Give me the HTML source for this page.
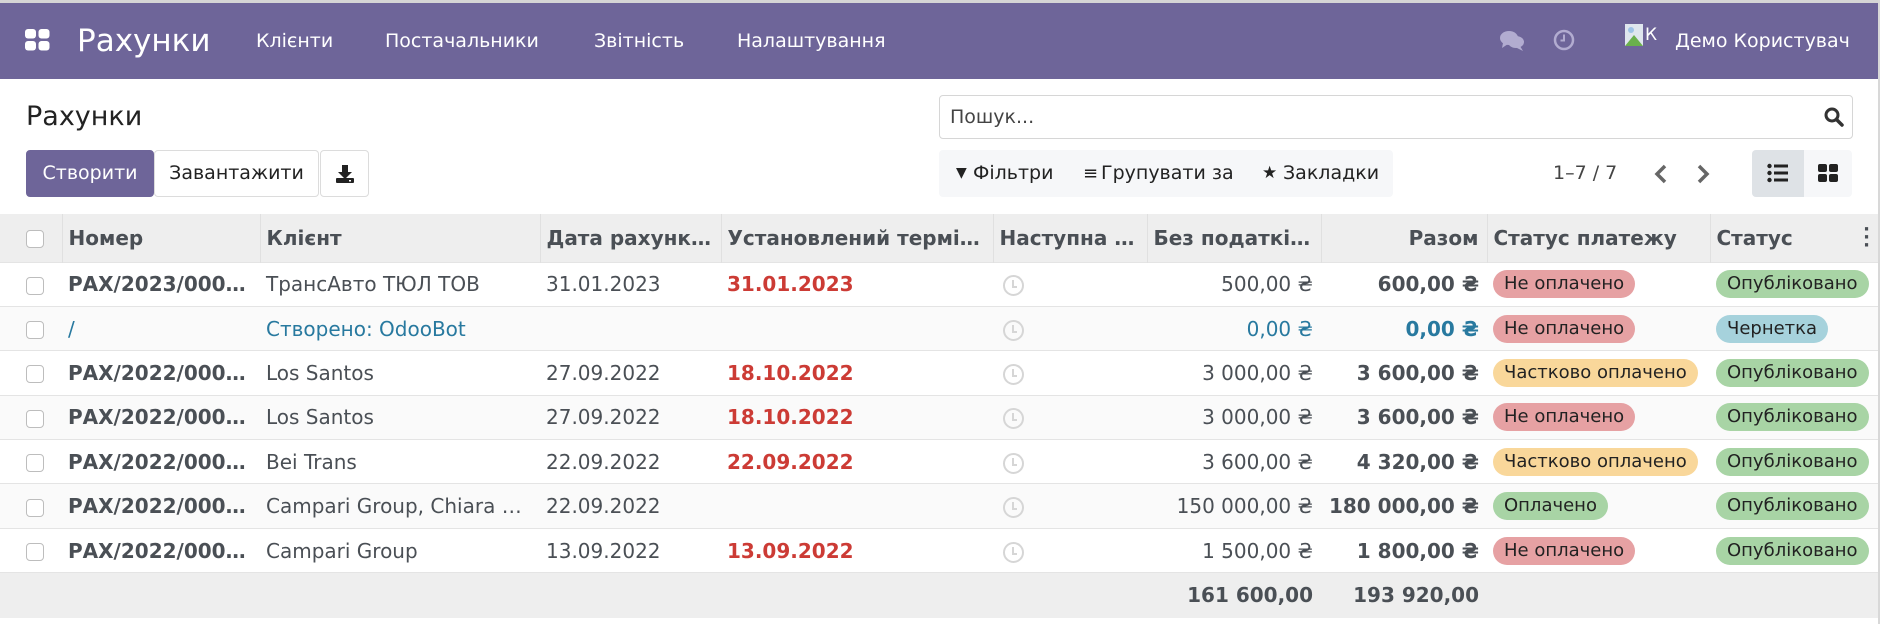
<!DOCTYPE html>
<html><head><meta charset="utf-8"><style>
*{box-sizing:border-box;margin:0;padding:0}
body{width:1880px;height:624px;overflow:hidden;background:#fff;font-family:"DejaVu Sans","Liberation Sans",sans-serif;color:#4a4f55;position:relative}
.top{position:absolute;left:0;top:0;width:1880px;height:3px;background:#d5d5d5}
.nav{position:absolute;left:0;top:3px;width:1878px;height:76px;background:#6e6599;color:#fff}
.nav .it{position:absolute;top:0;line-height:76px;font-size:19px}
.rb{position:absolute;right:0;top:0;width:2px;height:624px;background:#d8d8d8}
.abs{position:absolute}
.btn{position:absolute;top:150px;height:47px;line-height:45px;font-size:19px;border:1px solid #dcdcdc;border-radius:4px;text-align:center;color:#222}
table{position:absolute;left:0;top:214px;width:1878px;border-collapse:collapse;table-layout:fixed;font-size:20px}
td,th{white-space:nowrap;overflow:hidden;text-overflow:ellipsis;padding:0 6px;text-align:left}
th{height:48px;background:#eeeeee;font-weight:bold;border-left:1px solid #e0e0e0;color:#4a4f55}
tr.r td{height:44.4px;border-top:1px solid #e4e4e4}
tr.r:nth-child(odd) td{background:#fafafa}
tr.f td{height:45px;background:#eeeeee;border-top:1px solid #e4e4e4;font-weight:bold}
.cb{display:inline-block;width:18px;height:18px;border:1.5px solid #bdbdbd;border-radius:4px;background:#fff;vertical-align:middle}
.num{text-align:right;padding-right:8px}
.red{color:#cc3b35;font-weight:bold}
.blue{color:#28799f}
.b{font-weight:bold}
.bd{display:inline-block;height:28px;line-height:28px;padding:0 11px;border-radius:14px;color:#222;font-size:18px}
.bred{background:#e6a1a3}.bgr{background:#a8d4a5}.byl{background:#f9d79a}.bbl{background:#a6d2dc}
.clk{display:inline-block;width:21px;height:21px;border:2.5px solid #d6d6d6;border-radius:50%;position:relative;vertical-align:middle;margin-left:4px}
.clk:after{content:"";position:absolute;left:7px;top:3px;width:3px;height:6px;border-left:2px solid #d6d6d6;border-bottom:2px solid #d6d6d6}
</style></head><body>
<div class="top"></div>
<div class="nav">
  <svg class="abs" style="left:25px;top:26px" width="25" height="22" viewBox="0 0 25 22"><rect x="0" y="0" width="11" height="9.5" rx="3" fill="#fff"/><rect x="13.5" y="0" width="11" height="9.5" rx="3" fill="#fff"/><rect x="0" y="12" width="11" height="9.5" rx="3" fill="#fff"/><rect x="13.5" y="12" width="11" height="9.5" rx="3" fill="#fff"/></svg>
  <div class="it" style="left:77px;font-size:31px">Рахунки</div>
  <div class="it" style="left:256px">Клієнти</div>
  <div class="it" style="left:385px">Постачальники</div>
  <div class="it" style="left:594px">Звітність</div>
  <div class="it" style="left:737px">Налаштування</div>
  <svg class="abs" style="left:1499px;top:27px" width="26" height="22" viewBox="0 0 26 22"><ellipse cx="10" cy="8" rx="9" ry="7" fill="#b2acd0"/><path d="M4 13 L3 18 L9 14Z" fill="#b2acd0"/><ellipse cx="17" cy="12" rx="8" ry="6" fill="#b2acd0"/><path d="M21 16 L24 21 L16 17Z" fill="#b2acd0"/></svg>
  <svg class="abs" style="left:1553px;top:26px" width="22" height="22" viewBox="0 0 22 22"><circle cx="11" cy="11" r="9" fill="none" stroke="#b2acd0" stroke-width="2.5"/><path d="M11 5.5 V11.5 H7.5" fill="none" stroke="#b2acd0" stroke-width="2"/></svg>
  <svg class="abs" style="left:1624px;top:20px" width="22" height="24" viewBox="0 0 22 24"><rect x="1" y="1" width="18" height="22" fill="#dfe6ee"/><path d="M1 23 L10 12 L19 23Z" fill="#6ab04c"/><circle cx="7" cy="7" r="3" fill="#9fc3e6"/></svg>
  <div class="it" style="left:1645px;font-size:17px;top:-6px">К</div>
  <div class="it" style="left:1675px">Демо Користувач</div>
</div>
<div class="rb"></div>
<div class="abs" style="left:26px;top:101px;font-size:27px;color:#222">Рахунки</div>
<div class="btn" style="left:26px;width:128px;background:#6e6599;border-color:#6e6599;color:#fff">Створити</div>
<div class="btn" style="left:154px;width:165px">Завантажити</div>
<div class="btn" style="left:320px;width:49px"><svg width="20" height="20" viewBox="0 0 20 20" style="vertical-align:middle"><path d="M7 1h6v7h4l-7 7-7-7h4z" fill="#222"/><rect x="1" y="14" width="18" height="5" rx="1" fill="#222"/><rect x="14" y="16" width="2" height="1.5" fill="#fff"/></svg></div>
<div class="abs" style="left:939px;top:95px;width:914px;height:44px;border:1px solid #d6d6d6;border-radius:4px;font-size:19px;line-height:42px;padding-left:10px;color:#444">Пошук...
  <svg class="abs" style="right:8px;top:11px" width="20" height="20" viewBox="0 0 20 20"><circle cx="8" cy="8" r="6" fill="none" stroke="#333" stroke-width="3"/><path d="M12.5 12.5 L18 18" stroke="#333" stroke-width="3.5" stroke-linecap="round"/></svg></div>
<div class="abs" style="left:939px;top:150px;width:454px;height:47px;background:#f6f7f9;border-radius:4px;font-size:19px;line-height:47px;color:#222">
  <span class="abs" style="left:17px;font-size:14px">▼</span><span class="abs" style="left:34px">Фільтри</span>
  <span class="abs" style="left:144px;font-size:18px">≡</span><span class="abs" style="left:162px">Групувати за</span>
  <span class="abs" style="left:323px;font-size:17px">★</span><span class="abs" style="left:344px">Закладки</span>
</div>
<div class="abs" style="left:1553px;top:150px;line-height:47px;font-size:19px;color:#444">1–7 / 7</div>
<svg class="abs" style="left:1653px;top:164px" width="16" height="20" viewBox="0 0 16 20"><path d="M12 2 L4 10 L12 18" fill="none" stroke="#666" stroke-width="3.5"/></svg>
<svg class="abs" style="left:1695px;top:164px" width="16" height="20" viewBox="0 0 16 20"><path d="M4 2 L12 10 L4 18" fill="none" stroke="#666" stroke-width="3.5"/></svg>
<div class="abs" style="left:1752px;top:150px;width:100px;height:47px;background:#f6f7f9;border-radius:4px"></div>
<div class="abs" style="left:1752px;top:150px;width:52px;height:47px;background:#dee2e6;border-radius:4px 0 0 4px"></div>
<svg class="abs" style="left:1767px;top:163px" width="22" height="20" viewBox="0 0 22 20"><circle cx="2.5" cy="3" r="2.2" fill="#222"/><circle cx="2.5" cy="10" r="2.2" fill="#222"/><circle cx="2.5" cy="17" r="2.2" fill="#222"/><rect x="7" y="1.5" width="14" height="3" fill="#222"/><rect x="7" y="8.5" width="14" height="3" fill="#222"/><rect x="7" y="15.5" width="14" height="3" fill="#222"/></svg>
<svg class="abs" style="left:1818px;top:164px" width="20" height="18" viewBox="0 0 20 18"><rect x="0" y="0" width="9" height="8" rx="2" fill="#222"/><rect x="11" y="0" width="9" height="8" rx="2" fill="#222"/><rect x="0" y="10" width="9" height="8" rx="2" fill="#222"/><rect x="11" y="10" width="9" height="8" rx="2" fill="#222"/></svg>
<table>
<colgroup><col style="width:62px"><col style="width:198px"><col style="width:280px"><col style="width:181px"><col style="width:272px"><col style="width:154px"><col style="width:174px"><col style="width:166px"><col style="width:223px"><col style="width:168px"></colgroup>
<tr><th style="border-left:0;padding-left:26px"><span class="cb"></span></th><th>Номер</th><th>Клієнт</th><th>Дата рахунку на оплату</th><th>Установлений термін оплати</th><th>Наступна дія</th><th>Без податків всього</th><th class="num">Разом</th><th>Статус платежу</th><th style="position:relative">Статус<span style="position:absolute;right:8px;top:12px;font-size:18px;line-height:8px">·<br>·<br>·</span></th></tr>
<tr class="r"><td style="padding-left:26px"><span class="cb"></span></td><td class="b">РАХ/2023/000…</td><td>ТрансАвто ТЮЛ ТОВ</td><td>31.01.2023</td><td class="red">31.01.2023</td><td><span class="clk"></span></td><td class="num">500,00 ₴</td><td class="num b">600,00 ₴</td><td><span class="bd bred">Не оплачено</span></td><td><span class="bd bgr">Опубліковано</span></td></tr>
<tr class="r"><td style="padding-left:26px"><span class="cb"></span></td><td class="blue">/</td><td class="blue">Створено: OdooBot</td><td></td><td></td><td><span class="clk"></span></td><td class="num blue">0,00 ₴</td><td class="num blue b">0,00 ₴</td><td><span class="bd bred">Не оплачено</span></td><td><span class="bd bbl">Чернетка</span></td></tr>
<tr class="r"><td style="padding-left:26px"><span class="cb"></span></td><td class="b">РАХ/2022/000…</td><td>Los Santos</td><td>27.09.2022</td><td class="red">18.10.2022</td><td><span class="clk"></span></td><td class="num">3 000,00 ₴</td><td class="num b">3 600,00 ₴</td><td><span class="bd byl">Частково оплачено</span></td><td><span class="bd bgr">Опубліковано</span></td></tr>
<tr class="r"><td style="padding-left:26px"><span class="cb"></span></td><td class="b">РАХ/2022/000…</td><td>Los Santos</td><td>27.09.2022</td><td class="red">18.10.2022</td><td><span class="clk"></span></td><td class="num">3 000,00 ₴</td><td class="num b">3 600,00 ₴</td><td><span class="bd bred">Не оплачено</span></td><td><span class="bd bgr">Опубліковано</span></td></tr>
<tr class="r"><td style="padding-left:26px"><span class="cb"></span></td><td class="b">РАХ/2022/000…</td><td>Bei Trans</td><td>22.09.2022</td><td class="red">22.09.2022</td><td><span class="clk"></span></td><td class="num">3 600,00 ₴</td><td class="num b">4 320,00 ₴</td><td><span class="bd byl">Частково оплачено</span></td><td><span class="bd bgr">Опубліковано</span></td></tr>
<tr class="r"><td style="padding-left:26px"><span class="cb"></span></td><td class="b">РАХ/2022/000…</td><td>Campari Group, Chiara Campari</td><td>22.09.2022</td><td></td><td><span class="clk"></span></td><td class="num">150 000,00 ₴</td><td class="num b">180 000,00 ₴</td><td><span class="bd bgr">Оплачено</span></td><td><span class="bd bgr">Опубліковано</span></td></tr>
<tr class="r"><td style="padding-left:26px"><span class="cb"></span></td><td class="b">РАХ/2022/000…</td><td>Campari Group</td><td>13.09.2022</td><td class="red">13.09.2022</td><td><span class="clk"></span></td><td class="num">1 500,00 ₴</td><td class="num b">1 800,00 ₴</td><td><span class="bd bred">Не оплачено</span></td><td><span class="bd bgr">Опубліковано</span></td></tr>
<tr class="f"><td></td><td></td><td></td><td></td><td></td><td></td><td class="num">161 600,00</td><td class="num">193 920,00</td><td></td><td></td></tr>
</table>
</body></html>
